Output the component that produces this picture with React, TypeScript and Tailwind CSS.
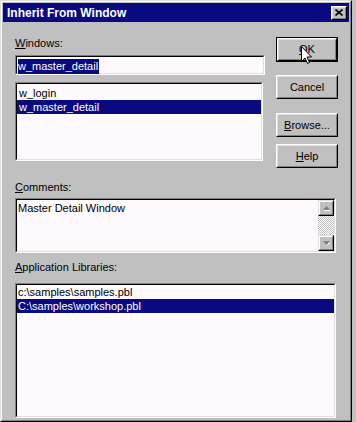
import React from "react";

// classic win95-style bevels
function Sunken({ className, innerClassName, children }: { className?: string; innerClassName?: string; children?: React.ReactNode }) {
  return (
    <div className={`border border-t-[#808080] border-l-[#808080] border-r-white border-b-white ${className ?? ""}`}>
      <div className={`h-full border border-t-black border-l-black border-r-[#dfdfdf] border-b-[#dfdfdf] bg-[#fdf9fd] ${innerClassName ?? ""}`}>
        {children}
      </div>
    </div>
  );
}

function Button({ children, isDefault, className }: { children: React.ReactNode; isDefault?: boolean; className?: string }) {
  const face = (
    <div className="h-full border border-t-white border-l-white border-r-black border-b-black">
      <div className="h-full border border-t-[#dfdfdf] border-l-[#dfdfdf] border-r-[#808080] border-b-[#808080] flex items-center justify-center">
        {children}
      </div>
    </div>
  );
  return (
    <div className={`w-[62px] ${className ?? ""}`}>
      {isDefault ? <div className="h-full border border-black">{face}</div> : face}
    </div>
  );
}

function Label({ first, rest }: { first: string; rest: string }) {
  return (
    <div className="h-[13px] leading-[13px]">
      <span className="underline underline-offset-1">{first}</span>
      {rest}
    </div>
  );
}

function ScrollArrow({ up }: { up?: boolean }) {
  return (
    <div className="h-[16px] border border-t-[#dfdfdf] border-l-[#dfdfdf] border-r-black border-b-black">
      <div className="h-full border border-t-white border-l-white border-r-[#808080] border-b-[#808080] bg-[#c0c0c0] flex items-center justify-center">
        <svg width="7" height="5" viewBox="0 0 7 5">
          {up ? (
            <>
              <polygon points="3.5,0 7,4 0,4" fill="#808080" />
              <line x1="1" y1="4.5" x2="7" y2="4.5" stroke="#fff" strokeWidth="1" />
            </>
          ) : (
            <>
              <polygon points="0,0 7,0 3.5,4" fill="#808080" />
              <line x1="4" y1="4.5" x2="7" y2="1" stroke="#fff" strokeWidth="1" />
            </>
          )}
        </svg>
      </div>
    </div>
  );
}

export default function App() {
  return (
    <div className="w-[356px] h-[422px] bg-[#c0c0c0] relative overflow-hidden font-['Liberation_Sans',Arial,sans-serif] text-[11px] text-black">
      <div className="w-[352px] h-[422px] border border-t-[#dfdfdf] border-l-[#dfdfdf] border-r-black border-b-black">
        <div className="h-full border border-t-white border-l-white border-r-[#808080] border-b-[#808080] p-px">
          {/* title bar */}
          <div className="h-[19px] bg-[#0a0a80] flex items-center justify-between pl-[4px] pr-[2px]">
            <span className="text-white font-bold text-[12px] leading-none">Inherit From Window</span>
            <div className="w-[16px] h-[14px] border border-t-white border-l-white border-r-black border-b-black">
              <div className="h-full border border-t-[#dfdfdf] border-l-[#dfdfdf] border-r-[#808080] border-b-[#808080] bg-[#c0c0c0] flex items-center justify-center">
                <svg width="8" height="7" viewBox="0 0 8 7">
                  <path d="M0.5 0.5 L7.5 6.5 M7.5 0.5 L0.5 6.5" stroke="#000" strokeWidth="1.6" />
                </svg>
              </div>
            </div>
          </div>

          <div className="pl-[12px]">
            <div className="flex pt-[15px]">
              <div className="w-[250px]">
                <Label first="W" rest="indows:" />
                <Sunken className="mt-[5px] h-[20px] w-[250px]" innerClassName="pl-px pt-[1px]">
                  <span className="inline-block bg-[#0a0a80] text-white h-[15px] leading-[15px] pr-px">w_master_detail</span>
                </Sunken>
                <Sunken className="mt-[7px] h-[79px] w-[248px]" innerClassName="pt-[2px]">
                  <div className="h-[14px] leading-[14px] pl-[2px]">w_login</div>
                  <div className="h-[14px] leading-[14px] pl-[2px] bg-[#0a0a80] text-white">w_master_detail</div>
                </Sunken>
              </div>

              <div className="ml-[11px] w-[62px]">
                <Button isDefault className="h-[25px]">
                  <span>
                    <span className="underline underline-offset-1">O</span>K
                  </span>
                </Button>
                <Button className="h-[24px] mt-[13px]">Cancel</Button>
                <Button className="h-[24px] mt-[14px]">
                  <span>
                    <span className="underline underline-offset-1">B</span>rowse...
                  </span>
                </Button>
                <Button className="h-[24px] mt-[7px]">
                  <span>
                    <span className="underline underline-offset-1">H</span>elp
                  </span>
                </Button>
              </div>
            </div>

            <div className="mt-[13px]">
              <Label first="C" rest="omments:" />
            </div>
            <Sunken className="mt-[4px] h-[55px] w-[321px]" innerClassName="flex">
              <div className="flex-1 pl-px pt-[2px] leading-[13px]">Master Detail Window</div>
              <div className="w-[16px] flex flex-col">
                <ScrollArrow up />
                <div className="flex-1 bg-[image:repeating-conic-gradient(#ffffff_0_25%,#c0c0c0_0_50%)] bg-[length:2px_2px]" />
                <ScrollArrow />
              </div>
            </Sunken>

            <div className="mt-[8px]">
              <Label first="A" rest="pplication Libraries:" />
            </div>
            <Sunken className="mt-[9px] h-[135px] w-[321px]">
              <div className="h-[14px] leading-[14px] pl-px">c:\samples\samples.pbl</div>
              <div className="h-[14px] leading-[14px] pl-px bg-[#0a0a80] text-white">C:\samples\workshop.pbl</div>
            </Sunken>
          </div>
        </div>
      </div>

      {/* mouse pointer over OK */}
      <svg className="absolute left-[301px] top-[46px]" width="12" height="19" viewBox="0 0 12 19">
        <path d="M0.5 0.5 L0.5 15.5 L4 12 L6.5 17.5 L8.5 16.5 L6 11 L10.5 11 Z" fill="#fff" stroke="#000" strokeWidth="1" strokeLinejoin="miter" />
      </svg>
    </div>
  );
}
